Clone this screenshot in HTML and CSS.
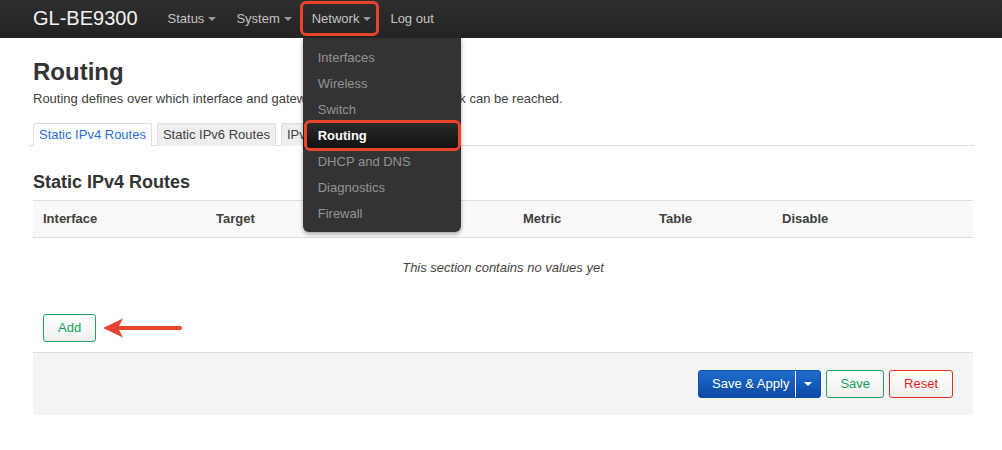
FILE: index.html
```html
<!DOCTYPE html>
<html>
<head>
<meta charset="utf-8">
<title>Routing</title>
<link rel="stylesheet" href="styles.css">
</head>
<body>
<header class="topbar">
  <div class="brand">GL-BE9300</div>
  <nav class="menu">
    <div class="menu-item">Status<span class="caret"></span></div>
    <div class="menu-item">System<span class="caret"></span></div>
    <div class="menu-item open">Network<span class="caret"></span>
      <span class="mark mark-nav"></span>
      <ul class="dropdown">
        <li>Interfaces</li>
        <li>Wireless</li>
        <li>Switch</li>
        <li class="current">Routing<span class="mark mark-item"></span></li>
        <li>DHCP and DNS</li>
        <li>Diagnostics</li>
        <li>Firewall</li>
      </ul>
    </div>
    <div class="menu-item">Log out</div>
  </nav>
</header>

<main class="page">
  <h2 class="title">Routing</h2>
  <p class="desc">Routing defines over which interface and gateway a certain host or network can be reached.</p>

  <ul class="tabs">
    <li class="tab active">Static IPv4 Routes</li>
    <li class="tab">Static IPv6 Routes</li>
    <li class="tab">IPv4 Rules</li>
    <li class="tab">IPv6 Rules</li>
  </ul>

  <h3 class="section-title">Static IPv4 Routes</h3>

  <table class="routes">
    <colgroup>
      <col class="c1"><col class="c2"><col class="c3"><col class="c4"><col class="c5"><col class="c6">
    </colgroup>
    <thead>
      <tr><th>Interface</th><th>Target</th><th>Gateway</th><th>Metric</th><th>Table</th><th>Disable</th></tr>
    </thead>
    <tbody>
      <tr><td class="empty" colspan="6">This section contains no values yet</td></tr>
    </tbody>
  </table>

  <div class="add-row">
    <button class="btn btn-green btn-add">Add</button>
    <svg class="arrow" width="80" height="22" viewBox="0 0 80 22">
      <path d="M14 11 H77" stroke="#e8432d" stroke-width="4" stroke-linecap="round" fill="none"/>
      <path d="M0 11 L20 1.5 L15 11 L20 20.5 Z" fill="#e8432d"/>
    </svg>
  </div>

  <div class="actions">
    <div class="split">
      <button class="split-main">Save &amp; Apply</button>
      <button class="split-toggle"><span class="caret caret-white"></span></button>
    </div>
    <button class="btn btn-green btn-save">Save</button>
    <button class="btn btn-red btn-reset">Reset</button>
  </div>
</main>
</body>
</html>
```

FILE: styles.css
```css
* { box-sizing: border-box; }
html, body { margin: 0; padding: 0; background: #fff; }
body {
  font-family: "Liberation Sans", Arial, Helvetica, sans-serif;
  font-size: 13px;
  color: #404040;
}

/* top bar */
.topbar {
  height: 38px;
  display: flex;
  align-items: stretch;
  padding-left: 33px;
  background: linear-gradient(#2e2e2e, #232323);
}
.brand {
  font-size: 20px;
  line-height: 36px;
  color: #f2f2f2;
  margin-right: 20px;
}
.menu { display: flex; }
.menu-item {
  position: relative;
  display: flex;
  align-items: center;
  padding: 0 10px 1px;
  color: #c4c4c4;
  font-size: 13px;
}
.menu-item:nth-child(2) { padding-right: 9px; }
.menu-item.open { padding-left: 11px; padding-right: 9px; }
.caret {
  display: inline-block;
  width: 0; height: 0;
  margin-left: 4px;
  margin-top: 1px;
  border-left: 4px solid transparent;
  border-right: 4px solid transparent;
  border-top: 4px solid #9a9a9a;
}
.caret-white { border-top-color: #fff; margin: 0; }

.mark {
  position: absolute;
  border: 3px solid #e8432d;
  border-radius: 6px;
  pointer-events: none;
}
.mark-nav { top: 1px; bottom: 2px; left: -1px; right: 1px; }

.dropdown {
  position: absolute;
  top: 38px;
  left: 2px;
  width: 158px;
  margin: 0;
  padding: 7px 0 5px;
  list-style: none;
  background: #333;
  border-radius: 0 0 6px 6px;
  box-shadow: 0 2px 4px rgba(0,0,0,0.35);
  z-index: 10;
}
.dropdown li {
  position: relative;
  height: 26px;
  line-height: 26px;
  padding: 0 15px;
  color: #949494;
  white-space: nowrap;
}
.dropdown li.current {
  color: #fff;
  font-weight: bold;
  background: linear-gradient(#2a2a2a, #111);
}
.mark-item { top: -3px; bottom: -2px; left: 1px; right: 0; }

/* page */
.page { padding: 0 29px 0 33px; }
.title {
  margin: 21px 0 0;
  font-size: 24px;
  line-height: 26px;
  font-weight: bold;
  color: #333;
}
.desc {
  margin: 5px 0 0;
  line-height: 18px;
}

.tabs {
  display: flex;
  gap: 5px;
  list-style: none;
  margin: 15px -1px 0 -5px;
  padding: 0 0 0 5px;
  border-bottom: 1px solid #ddd;
  height: 23px;
}
.tab {
  height: 23px;
  line-height: 21px;
  padding: 0 5px;
  border: 1px solid #ddd;
  border-bottom: none;
  border-radius: 3px 3px 0 0;
  background: #eee;
  color: #404040;
  white-space: nowrap;
}
.tab.active {
  background: #fff;
  color: #2a6fd6;
  height: 23px;
  margin-bottom: -1px;
  position: relative;
}
.tab.active::after {
  content: "";
  position: absolute;
  left: 0; right: 0; bottom: -1px;
  height: 1px;
  background: #fff;
}

.section-title {
  margin: 26px 0 0;
  font-size: 18px;
  line-height: 20px;
  font-weight: bold;
  color: #333;
}

.routes {
  width: 940px;
  margin-top: 8px;
  border-collapse: collapse;
  table-layout: fixed;
}
.c1 { width: 173px; }
.c2 { width: 154px; }
.c3 { width: 153px; }
.c4 { width: 136px; }
.c5 { width: 123px; }
.c6 { width: 201px; }
.routes th {
  text-align: left;
  font-weight: bold;
  height: 37px;
  padding: 0 10px 2px;
  background: #f9f9f9;
  border-top: 1px solid #ddd;
  border-bottom: 1px solid #ddd;
  color: #404040;
}
.routes td.empty {
  text-align: center;
  font-style: italic;
  line-height: 18px;
  padding: 21px 0 19px;
  color: #444;
}

.add-row {
  display: flex;
  align-items: center;
  margin-top: 18px;
  padding-left: 10px;
}
.arrow { margin-left: 7px; display: block; }

.btn {
  font-family: inherit;
  font-size: 13px;
  height: 28px;
  line-height: 26px;
  padding: 0 14px;
  border-radius: 3px;
  background: linear-gradient(#ffffff, #efefef);
  cursor: pointer;
}
.btn-green { border: 1px solid #1fa363; color: #17a05b; }
.btn-red { border: 1px solid #e8301f; color: #e3261a; }
.btn-save { padding: 0 13px; }
.btn-reset { padding: 0 14px; }

.actions {
  margin-top: 10px;
  display: flex;
  justify-content: flex-end;
  gap: 5px;
  padding: 17px 20px 17px 0;
  background: #f4f4f4;
  border-top: 1px solid #ddd;
  border-radius: 0 0 4px 4px;
}
.split {
  display: flex;
  height: 28px;
  border-radius: 3px;
  border: 1px solid #0d4ea6;
  background: linear-gradient(#1f6cce, #0b4aa3);
  overflow: hidden;
}
.split-main, .split-toggle {
  font-family: inherit;
  font-size: 13px;
  color: #fff;
  background: transparent;
  border: none;
  height: 26px;
  line-height: 26px;
}
.split-main {
  padding: 0 6px 0 13px;
  border-right: 1px solid #fff;
}
.split-toggle {
  width: 24px;
  padding: 0;
  display: flex;
  align-items: center;
  justify-content: center;
}
```
